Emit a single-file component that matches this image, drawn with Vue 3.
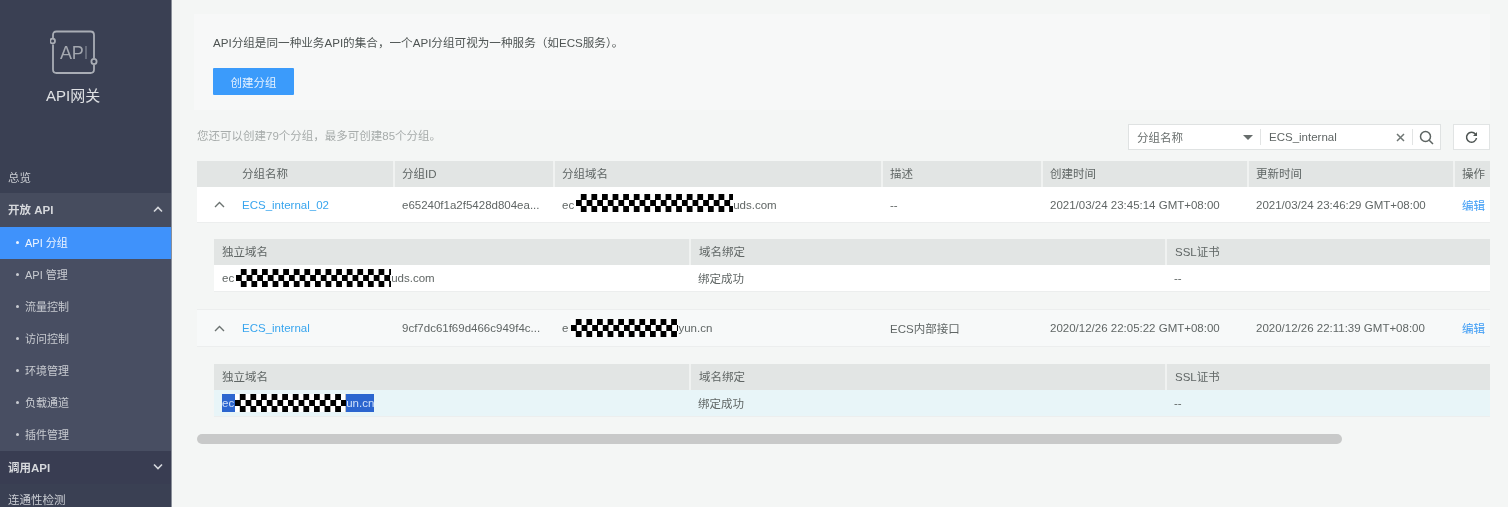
<script setup>
const nav = ['API 管理', '流量控制', '访问控制', '环境管理', '负载通道', '插件管理']
const cols = ['分组名称', '分组ID', '分组域名', '描述', '创建时间', '更新时间', '操作']
const groups = [
  {
    name: 'ECS_internal_02', id: 'e65240f1a2f5428d804ea...', pre: 'ec', post: 'uds.com', maskW: 157, maskGap: 2,
    desc: '--', created: '2021/03/24 23:45:14 GMT+08:00', updated: '2021/03/24 23:46:29 GMT+08:00',
    rowClass: 'white', subPre: 'ec', subPost: 'uds.com', subMask: 155, subGap: 2, selected: false
  },
  {
    name: 'ECS_internal', id: '9cf7dc61f69d466c949f4c...', pre: 'e', post: 'yun.cn', maskW: 107, maskGap: 3,
    desc: 'ECS内部接口', created: '2020/12/26 22:05:22 GMT+08:00', updated: '2020/12/26 22:11:39 GMT+08:00',
    rowClass: 'pale', subPre: 'ec', subPost: 'un.cn', subMask: 111, subGap: 1, selected: true
  }
]
</script>

<template>
  <div class="page">
    <aside class="side soft">
      <div class="brand">
        <svg class="logo" width="48" height="46" viewBox="0 0 48 46" fill="none" stroke="#a9adb5" stroke-width="1.800">
          <path d="M3 8V5Q3 1.500 6.500 1.500H40.500Q44 1.500 44 5V28" />
          <circle cx="2.600" cy="11" r="2.400" />
          <path d="M3 14.500V39.500Q3 43 6.500 43H40.500Q44 43 44 39.500V35" />
          <circle cx="44" cy="31.500" r="2.600" />
        </svg>
        <span class="logo-text">AP<span class="dim">I</span></span>
        <div class="brand-name">API网关</div>
      </div>
      <div class="overview">总览</div>
      <div class="group open">
        <span>开放 API</span>
        <svg width="10" height="7" viewBox="0 0 10 7" fill="none" stroke="#d5d8dd" stroke-width="1.600"><path d="M1 5.500L5 1.500L9 5.500" /></svg>
      </div>
      <div class="sub active"><i></i>API 分组</div>
      <div class="subs">
        <div v-for="n in nav" :key="n" class="sub"><i></i>{{ n }}</div>
      </div>
      <div class="group">
        <span>调用API</span>
        <svg width="10" height="7" viewBox="0 0 10 7" fill="none" stroke="#d5d8dd" stroke-width="1.600"><path d="M1 1.500L5 5.500L9 1.500" /></svg>
      </div>
      <div class="overview last">连通性检测</div>
    </aside>

    <main class="main">
      <section class="intro soft">
        <p>API分组是同一种业务API的集合，一个API分组可视为一种服务（如ECS服务）。</p>
        <button class="create">创建分组</button>
      </section>

      <div class="tools soft">
        <span class="quota">您还可以创建79个分组，最多可创建85个分组。</span>
        <div class="search">
          <span class="sel">分组名称</span>
          <span class="caret"></span>
          <span class="divider"></span>
          <span class="val">ECS_internal</span>
          <svg class="x" width="9" height="9" viewBox="0 0 9 9" stroke="#6f7674" stroke-width="1.500"><path d="M1 1L8 8M8 1L1 8" /></svg>
          <span class="divider thin"></span>
          <svg class="mag" width="15" height="15" viewBox="0 0 15 15" fill="none" stroke="#5d6462" stroke-width="1.500"><circle cx="6.500" cy="6.500" r="5" /><path d="M10.200 10.200L14 14" /></svg>
        </div>
        <button class="refresh" aria-label="刷新">
          <svg width="13" height="13" viewBox="0 0 13 13" fill="none" stroke="#4e5553" stroke-width="1.500"><path d="M10.500 3.200A5 5 0 1 0 11.500 7" /><path d="M12 1V5H8Z" fill="#4e5553" stroke="none" /></svg>
        </button>
      </div>

      <div class="table">
        <div class="row head soft">
          <div v-for="(c, i) in cols" :key="c" class="cell" :class="{ first: i === 0 }">{{ c }}</div>
        </div>
        <template v-for="g in groups" :key="g.name">
          <div class="row body" :class="g.rowClass">
            <div class="cell first soft">
              <svg class="chev" width="11" height="7" viewBox="0 0 11 7" fill="none" stroke="#6b7270" stroke-width="1.400"><path d="M1 6L5.500 1.500L10 6" /></svg>
              <a class="link">{{ g.name }}</a>
            </div>
            <div class="cell soft">{{ g.id }}</div>
            <div class="cell">
              <span class="soft">{{ g.pre }}</span>
              <span class="mask" :style="{ width: g.maskW + 'px', marginLeft: g.maskGap + 'px' }"></span>
              <span class="soft">{{ g.post }}</span>
            </div>
            <div class="cell soft">{{ g.desc }}</div>
            <div class="cell soft">{{ g.created }}</div>
            <div class="cell soft">{{ g.updated }}</div>
            <div class="cell soft"><a class="edit">编辑</a></div>
          </div>
          <div class="detail">
            <div class="subrow subhead soft">
              <div class="cell">独立域名</div>
              <div class="cell">域名绑定</div>
              <div class="cell">SSL证书</div>
            </div>
            <div class="subrow subbody" :class="{ hl: g.selected }">
              <div class="cell domain">
                <span class="pick" :class="{ picked: g.selected }">
                  <span class="soft">{{ g.subPre }}</span>
                  <span class="mask" :style="{ width: g.subMask + 'px', marginLeft: g.subGap + 'px' }"></span>
                  <span class="soft">{{ g.subPost }}</span>
                </span>
              </div>
              <div class="cell soft">绑定成功</div>
              <div class="cell soft">--</div>
            </div>
          </div>
        </template>
      </div>
      <div class="thumb"></div>
    </main>
  </div>
</template>

<style>
html, body { margin: 0; overflow: hidden; background: #f4f6f5; }
</style>

<style scoped>
.page {
  display: flex;
  width: 1508px;
  height: 507px;
  overflow: hidden;
  background: #f4f6f5;
  font: 11.500px "Liberation Sans", "Noto Sans CJK SC", sans-serif;
  color: #606665;
}
.soft { filter: blur(.6px); }
.side {
  width: 172px;
  flex: none;
  background: #3a4053;
  color: #c9ccd2;
  border-right: 1px solid #8a8f99;
  box-sizing: border-box;
  overflow: hidden;
}
.brand { position: relative; height: 165px; padding: 30px 0 0 50px; box-sizing: border-box; }
.logo { display: block; }
.logo-text { position: absolute; left: 60px; top: 42px; font-size: 18px; line-height: 22px; color: #a3a7af; letter-spacing: -.3px; }
.dim { color: #6f7482; }
.brand-name { margin: 11px 0 0 -4px; font-size: 15px; color: #dfe1e4; line-height: 18px; }
.overview { height: 28px; padding-left: 8px; line-height: 26px; color: #c9ccd2; }
.overview.last { height: 24px; line-height: 33px; }
.group {
  height: 33px;
  padding: 0 8px 2px;
  box-sizing: border-box;
  display: flex;
  align-items: center;
  justify-content: space-between;
  background: #393d52;
  font-weight: bold;
  color: #d6d8dc;
}
.group.open { background: #464c5e; height: 34px; }
.subs { background: #484e62; }
.sub { height: 32px; padding: 0 0 2px 16px; box-sizing: border-box; display: flex; align-items: center; font-size: 11px; color: #c8cbd1; }
.sub i { width: 3px; height: 3px; border-radius: 50%; background: #c8cbd1; margin-right: 6px; }
.sub.active { background: #3f92fb; color: #eef5ff; }
.sub.active i { background: #eef5ff; }

.main { flex: 1; min-width: 0; padding: 14px 18px 0 25px; box-sizing: border-box; }
.intro {
  height: 96px;
  margin-left: -3px;
  padding: 21px 0 0 19px;
  box-sizing: border-box;
  background: #f7f8f8;
}
.intro p { margin: 0; font-size: 11.600px; line-height: 15px; color: #4e5453; }
.create {
  display: block;
  width: 81px;
  height: 27px;
  margin-top: 18px;
  border: 0;
  border-radius: 1px;
  background: #3b9bfb;
  color: #e4f1ff;
  font: inherit;
  padding: 0;
}
.tools { height: 37px; display: flex; align-items: flex-start; margin-top: 14px; }
.quota { color: #a7acab; line-height: 25px; flex: 1; }
.search {
  width: 313px;
  height: 26px;
  box-sizing: border-box;
  background: #fff;
  border: 1px solid #dfe2e2;
  display: flex;
  align-items: center;
  padding-left: 8px;
  color: #686e6d;
}
.sel { width: 106px; }
.caret { width: 0; height: 0; border: 5px solid transparent; border-top: 5px solid #676d6c; border-bottom: 0; margin-right: 7px; }
.divider { width: 1px; height: 16px; background: #e2e4e4; flex: none; }
.val { flex: 1; padding-left: 8px; color: #5f6564; }
.x { margin-right: 7px; }
.mag { margin: 0 6px; }
.refresh {
  width: 37px;
  height: 26px;
  margin-left: 12px;
  padding: 0;
  background: #fff;
  border: 1px solid #e1e4e4;
  display: flex;
  align-items: center;
  justify-content: center;
}

.table { width: 1293px; }
.row { display: grid; grid-template-columns: 196px 160px 328px 160px 206px 206px 37px; }
.head { height: 26px; background: #e2e5e4; }
.head .cell { border-left: 2px solid #f0f2f1; line-height: 26px; padding-left: 7px; }
.head .cell.first { border-left: 0; padding-left: 45px; }
.body { height: 36px; align-items: center; border-bottom: 1px solid #eceeee; box-sizing: border-box; }
.body.white { background: #fff; }
.body.pale { background: #f7f9f9; border-top: 1px solid #eceeee; height: 38px; }
.body .cell { padding-left: 9px; display: flex; align-items: center; white-space: nowrap; overflow: hidden; height: 100%; }
.body .cell.first { padding-left: 17px; }
.chev { margin-right: 17px; }
.link { color: #38a5ee; }
.edit { color: #3d9cf5; }
.mask {
  display: block;
  height: 18px;
  flex: none;
  background: repeating-conic-gradient(#000 0 25%, #fff 0 50%) 0 0 / 10.600px 12px;
}
.white .mask { margin-bottom: 3px; }
.detail { padding: 16px 0 0 17px; height: 86px; box-sizing: border-box; }
.pale + .detail { padding-top: 17px; }
.subrow { display: grid; grid-template-columns: 475px 476px 325px; }
.subhead { height: 26px; background: #e2e5e4; line-height: 26px; }
.subhead .cell { padding-left: 8px; border-left: 2px solid #f0f2f1; }
.subhead .cell:first-child { border-left: 0; }
.subbody { height: 27px; background: #fff; align-items: center; border-bottom: 1px solid #eceeee; box-sizing: border-box; }
.subbody .cell { padding-left: 9px; white-space: nowrap; }
.subbody .cell.domain { padding-left: 8px; display: flex; }
.subbody.hl { background: #e8f5f8; }
.pick { display: inline-flex; align-items: center; }
.picked { background: #2b65cf; color: #cfe0fa; }
.thumb { width: 1145px; height: 10px; border-radius: 5px; background: #c8c9c9; margin-top: 1px; }
</style>
